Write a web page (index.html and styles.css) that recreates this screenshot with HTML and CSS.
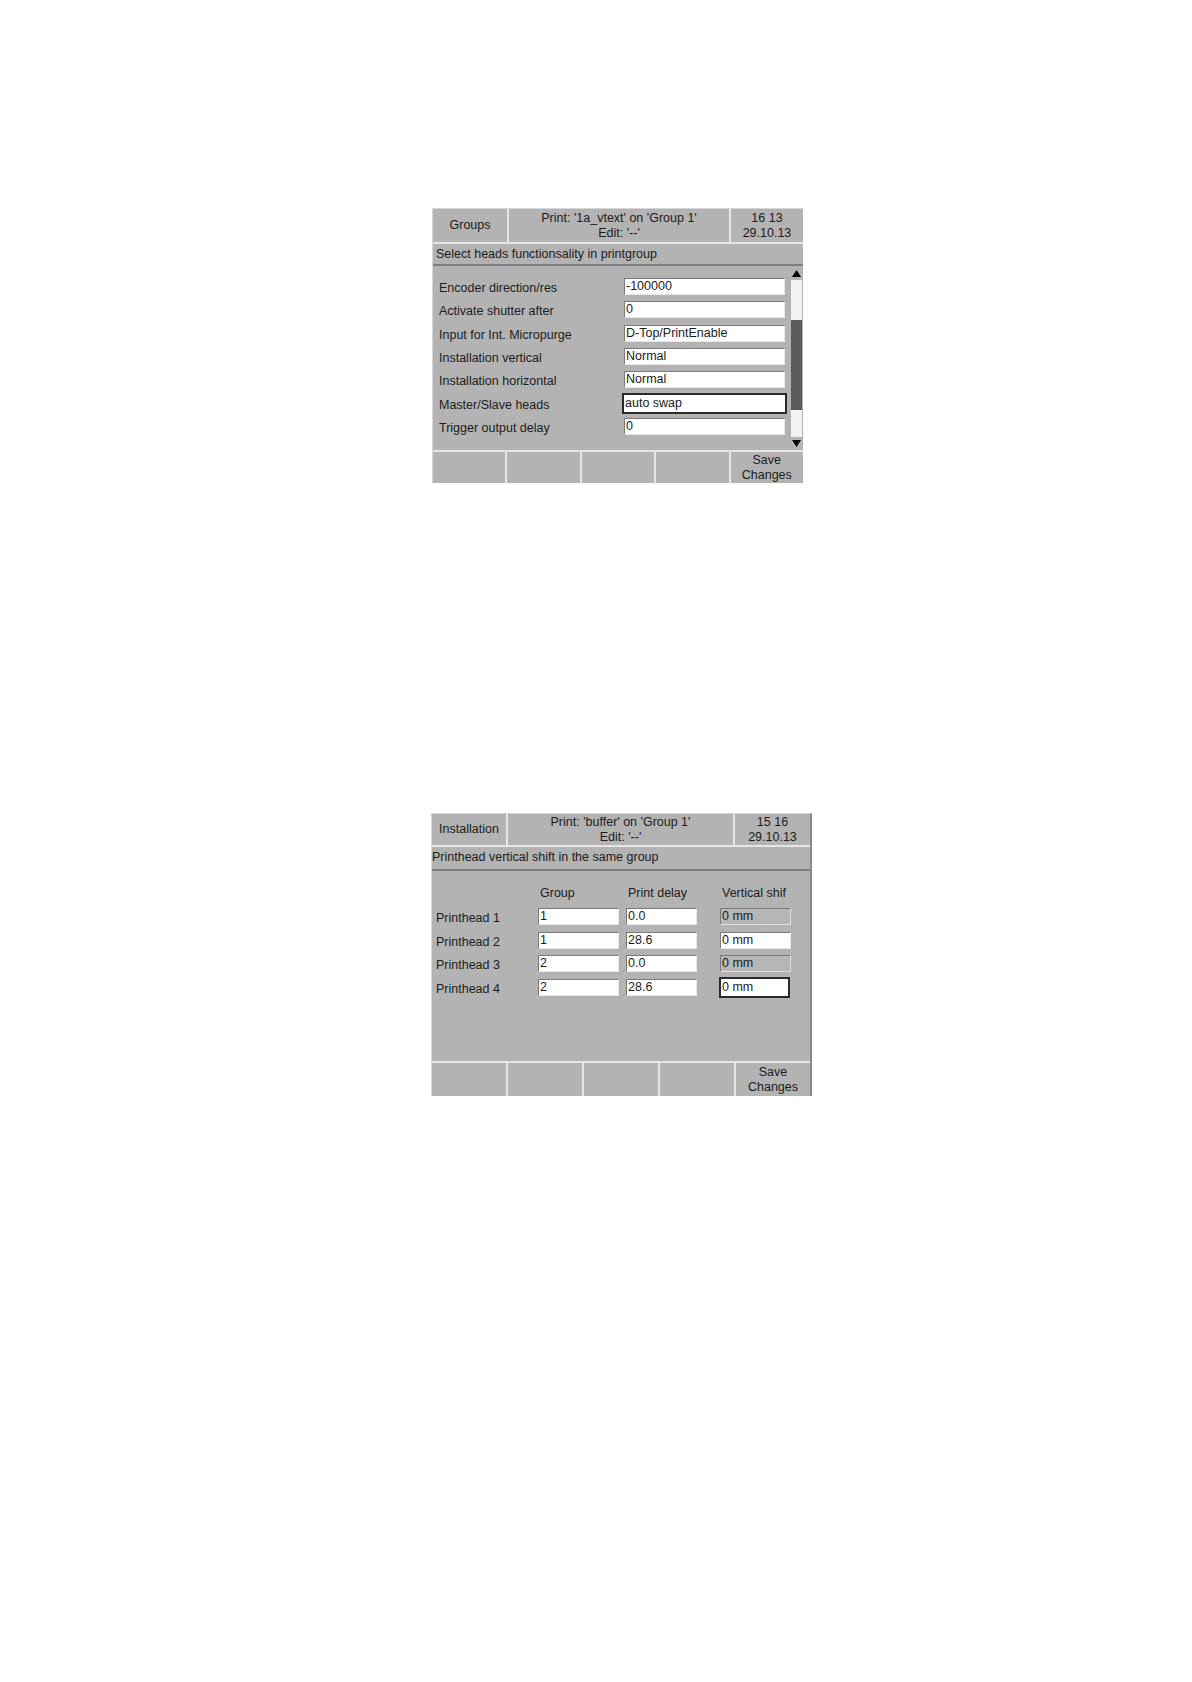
FILE: index.html
```html
<!DOCTYPE html>
<html>
<head>
<meta charset="utf-8">
<link rel="stylesheet" href="styles.css">
</head>
<body>
<div class="panel p1">
  <div class="hdr h1">
    <div class="cell">Groups</div>
    <div class="cell">Print: '1a_vtext' on 'Group 1'<br>Edit: '--'</div>
    <div class="cell">16 13<br>29.10.13</div>
  </div>
  <div class="sub">Select heads functionsality in printgroup</div>
  <div class="body b1">
    <div class="rows">
      <div class="row"><span class="lbl">Encoder direction/res</span><span class="inp">-100000</span></div>
      <div class="row"><span class="lbl">Activate shutter after</span><span class="inp">0</span></div>
      <div class="row"><span class="lbl">Input for Int. Micropurge</span><span class="inp">D-Top/PrintEnable</span></div>
      <div class="row"><span class="lbl">Installation vertical</span><span class="inp">Normal</span></div>
      <div class="row"><span class="lbl">Installation horizontal</span><span class="inp">Normal</span></div>
      <div class="row"><span class="lbl">Master/Slave heads</span><span class="inp focus">auto swap</span></div>
      <div class="row"><span class="lbl">Trigger output delay</span><span class="inp">0</span></div>
    </div>
    <div class="scroll">
      <div class="arrow"><svg width="9" height="7" viewBox="0 0 9 7"><polygon points="4.5,0 9,7 0,7" fill="#000"/></svg></div>
      <div class="track"><div class="thumb"></div></div>
      <div class="arrow"><svg width="9" height="7" viewBox="0 0 9 7"><polygon points="0,0 9,0 4.5,7" fill="#000"/></svg></div>
    </div>
  </div>
  <div class="foot f1">
    <div class="btn"></div><div class="btn"></div><div class="btn"></div><div class="btn"></div><div class="btn">Save<br>Changes</div>
  </div>
</div>

<div class="panel p2">
  <div class="hdr h2">
    <div class="cell">Installation</div>
    <div class="cell">Print: 'buffer' on 'Group 1'<br>Edit: '--'</div>
    <div class="cell">15 16<br>29.10.13</div>
  </div>
  <div class="sub sub2">Printhead vertical shift in the same group</div>
  <div class="body b2">
    <div class="grid">
      <span></span><span class="ch">Group</span><span class="ch">Print delay</span><span class="ch ch3">Vertical shif</span>
      <span class="lbl2">Printhead 1</span><span class="inp i1">1</span><span class="inp i2">0.0</span><span class="inp i3 dis">0 mm</span>
      <span class="lbl2">Printhead 2</span><span class="inp i1">1</span><span class="inp i2">28.6</span><span class="inp i3">0 mm</span>
      <span class="lbl2">Printhead 3</span><span class="inp i1">2</span><span class="inp i2">0.0</span><span class="inp i3 dis">0 mm</span>
      <span class="lbl2">Printhead 4</span><span class="inp i1">2</span><span class="inp i2">28.6</span><span class="inp i3 focus">0 mm</span>
    </div>
  </div>
  <div class="foot f2">
    <div class="btn"></div><div class="btn"></div><div class="btn"></div><div class="btn"></div><div class="btn">Save<br>Changes</div>
  </div>
</div>
</body>
</html>
```
FILE: styles.css
```css
html, body {
  margin: 0;
  padding: 0;
  background: #ffffff;
}
body {
  font-family: "Liberation Sans", Arial, sans-serif;
  font-size: 12.5px;
  color: #1c1c1c;
  width: 1192px;
  height: 1682px;
}
.panel {
  background: #b3b3b3;
  box-sizing: border-box;
  border-top: 1px solid #d6d6d6;
  border-left: 1px solid #d6d6d6;
}
.p1 {
  margin: 208px 0 0 432px;
  width: 371px;
}
.p2 {
  margin: 330px 0 0 431px;
  width: 381px;
  border-right: 2px solid #8a8a8a;
}
.hdr {
  display: grid;
  gap: 2px;
  background: #e6e6e6;
  padding-bottom: 2px;
}
.h1 { grid-template-columns: 74px 1fr 72px; }
.h2 { grid-template-columns: 74px 1fr 75px; }
.cell {
  background: #b3b3b3;
  height: 33px;
  display: flex;
  align-items: center;
  justify-content: center;
  text-align: center;
  line-height: 15px;
}
.h2 .cell { height: 31px; }
.sub {
  height: 20px;
  line-height: 20px;
  padding-left: 3px;
  border-bottom: 2px solid #7e7e7e;
}
.sub2 {
  height: 22px;
  line-height: 21px;
  padding-left: 0;
}
.body {
  display: flex;
}
.b1 { height: 184px; }
.b2 { height: 190px; }
.rows {
  flex: 1;
  padding-top: 9px;
}
.row {
  display: flex;
  align-items: center;
  height: 23.3px;
}
.lbl {
  width: 191px;
  padding-left: 6px;
  padding-top: 3px;
  box-sizing: border-box;
  white-space: nowrap;
}
.inp {
  display: block;
  box-sizing: border-box;
  height: 17px;
  line-height: 15px;
  background: #ffffff;
  border-top: 1px solid #7a7a7a;
  border-left: 1px solid #7a7a7a;
  border-right: 1px solid #e8e8e8;
  border-bottom: 1px solid #e8e8e8;
  padding-left: 1px;
  white-space: nowrap;
  overflow: hidden;
}
.rows .inp { width: 161px; }
.inp.focus {
  border: 2px solid #2a2a2a;
  height: 21px;
  line-height: 17px;
  padding-left: 1px;
}
.rows .inp.focus {
  width: 165px;
  margin-left: -2px;
}
.scroll {
  width: 12px;
  margin: 1px 1px 0 4px;
  display: flex;
  flex-direction: column;
  background: #ffffff;
}
.arrow {
  height: 13px;
  background: #b3b3b3;
  display: flex;
  align-items: center;
  justify-content: center;
}
.track {
  flex: 1;
  background: #f2f2f2;
  padding-top: 40px;
}
.thumb {
  height: 90px;
  background: #5a5a5a;
}
.foot {
  display: grid;
  grid-template-columns: repeat(5, 1fr);
  gap: 2px;
  background: #e6e6e6;
  padding-top: 2px;
}
.btn {
  background: #b3b3b3;
  height: 31px;
  display: flex;
  align-items: center;
  justify-content: center;
  text-align: center;
  line-height: 15px;
}
.f2 .btn { height: 33px; }
.grid {
  display: grid;
  grid-template-columns: 95px 81px 71px 94px;
  column-gap: 7px;
  row-gap: 0;
  grid-auto-rows: 23.7px;
  padding: 10px 0 0 4px;
  align-items: center;
}
.grid .inp { width: 100%; }
.grid .i3 { width: 71px; margin-left: 16px; }
.grid .i3.focus { width: 71px; margin-left: 15px; height: 21px; }
.ch { padding-left: 2px; }
.ch3 { padding-left: 18px; white-space: nowrap; }
.lbl2 { padding-top: 3px; }
.inp.dis {
  background: #b6b6b6;
  border-top: 1px solid #7a7a7a;
  border-left: 1px solid #7a7a7a;
  border-right: 1px solid #e0e0e0;
  border-bottom: 1px solid #e0e0e0;
}
```
